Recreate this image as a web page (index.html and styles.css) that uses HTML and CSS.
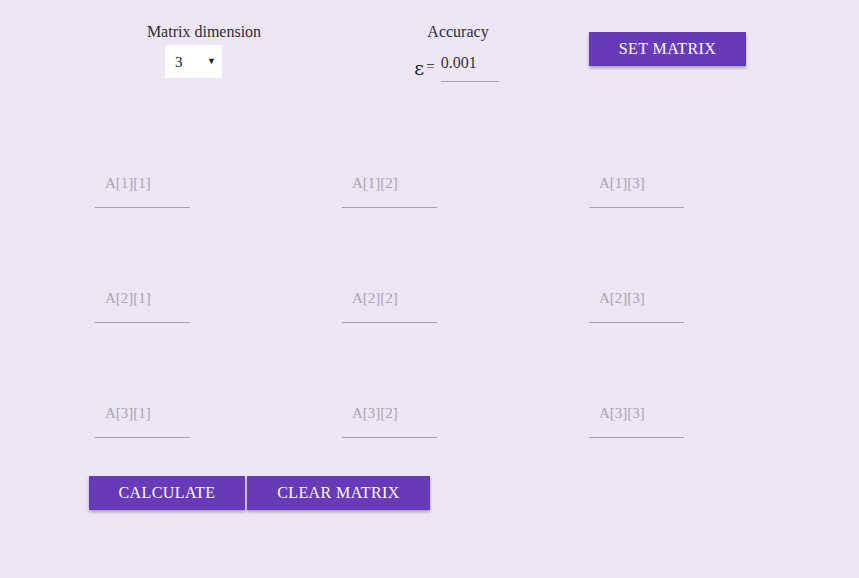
FILE: index.html
```html
<!DOCTYPE html>
<html>
<head>
<meta charset="utf-8">
<link rel="stylesheet" href="styles.css">
</head>
<body>
<div class="top">
  <div class="field dim">
    <div class="label">Matrix dimension</div>
    <div class="select-wrap">
      <select class="select"><option>3</option></select>
      <span class="arrow">▼</span>
    </div>
  </div>
  <div class="field acc">
    <div class="label">Accuracy</div>
    <div class="acc-row">
      <span class="eps">ɛ</span><span class="eq">=</span>
      <input class="acc-input" type="text" value="0.001">
    </div>
  </div>
  <button class="btn set">SET MATRIX</button>
</div>
<div class="matrix">
  <input class="cell" placeholder="A[1][1]">
  <input class="cell" placeholder="A[1][2]">
  <input class="cell" placeholder="A[1][3]">
  <input class="cell" placeholder="A[2][1]">
  <input class="cell" placeholder="A[2][2]">
  <input class="cell" placeholder="A[2][3]">
  <input class="cell" placeholder="A[3][1]">
  <input class="cell" placeholder="A[3][2]">
  <input class="cell" placeholder="A[3][3]">
</div>
<div class="actions">
  <button class="btn calc">CALCULATE</button>
  <button class="btn clear">CLEAR MATRIX</button>
</div>
</body>
</html>
```
FILE: styles.css
```css
html, body {
  margin: 0;
  padding: 0;
  background: #ede7f5;
  font-family: "Liberation Serif", "Times New Roman", serif;
  color: #333;
}
body {
  width: 859px;
  height: 578px;
  overflow: hidden;
}
.top {
  display: flex;
  align-items: flex-start;
  padding-top: 22px;
  padding-left: 104px;
  height: 60px;
}
.field {
  width: 200px;
  display: flex;
  flex-direction: column;
  align-items: center;
}
.acc {
  margin-left: 54px;
}
.label {
  font-size: 16px;
  line-height: 20px;
  color: #2f2b33;
}
.select-wrap {
  position: relative;
  align-self: flex-start;
  margin-left: 61px;
  margin-top: 3px;
  width: 57px;
  height: 33px;
  background: #fff;
}
.select {
  appearance: none;
  -webkit-appearance: none;
  border: none;
  background: transparent;
  width: 57px;
  height: 33px;
  padding: 0 0 0 10px;
  font-family: "Liberation Serif", serif;
  font-size: 15px;
  color: #222;
  outline: none;
}
.arrow {
  position: absolute;
  right: 6px;
  top: 11px;
  font-size: 9px;
  color: #222;
  pointer-events: none;
}
.acc-row {
  display: flex;
  align-items: center;
  margin-top: 3px;
  height: 37px;
  margin-left: -3px;
}
.eps {
  font-family: "DejaVu Serif", serif;
  font-size: 19px;
  color: #222;
  margin-top: 8px;
}
.eq {
  font-size: 15px;
  margin-left: 2px;
  margin-right: 6px;
  color: #222;
  margin-top: 6px;
}
.acc-input {
  width: 58px;
  height: 37px;
  box-sizing: border-box;
  border: none;
  border-bottom: 1px solid #a7a0ad;
  background: transparent;
  padding: 0;
  font-family: "Liberation Serif", serif;
  font-size: 16px;
  color: #333;
  outline: none;
}
.btn {
  background: #673ab7;
  color: #fff;
  border: none;
  font-family: "Liberation Serif", serif;
  font-weight: 400;
  font-size: 16px;
  letter-spacing: 0.4px;
  height: 34px;
  padding: 0;
  box-shadow: 0 2px 3px rgba(40, 20, 60, 0.35);
  cursor: pointer;
}
.set {
  margin-left: 31px;
  margin-top: 10px;
  width: 157px;
}
.matrix {
  display: grid;
  grid-template-columns: repeat(3, 247px);
  row-gap: 74px;
  padding-left: 95px;
  margin-top: 85px;
}
.cell {
  width: 95px;
  height: 41px;
  box-sizing: border-box;
  border: none;
  border-bottom: 1px solid #a7a0ad;
  background: transparent;
  padding: 0 0 7px 10px;
  font-family: "Liberation Serif", serif;
  font-size: 15px;
  outline: none;
}
.cell::placeholder {
  color: #a9a3ae;
}
.actions {
  display: flex;
  gap: 2px;
  padding-left: 89px;
  margin-top: 38px;
}
.calc {
  width: 156px;
}
.clear {
  width: 183px;
}
```
